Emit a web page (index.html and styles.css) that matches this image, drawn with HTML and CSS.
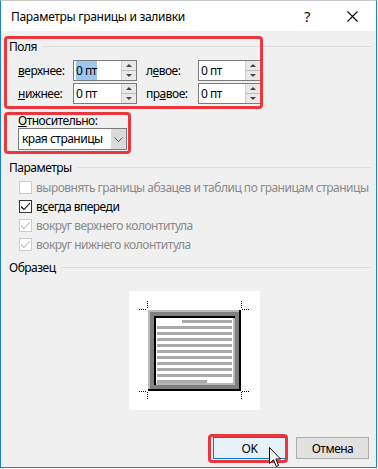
FILE: index.html
```html
<!DOCTYPE html>
<html lang="ru">
<head>
  <meta charset="UTF-8">
  <title>Параметры границы и заливки</title>
  <link rel="stylesheet" href="styles.css">
</head>
<body>
<div class="window">
  <div class="titlebar">
    <span class="title">Параметры границы и заливки</span>
    <span class="help">?</span>
    <span class="close">
      <svg width="11" height="11" viewBox="0 0 11 11"><path d="M0.5 0.5 L10.5 10.5 M10.5 0.5 L0.5 10.5" stroke="#000" stroke-width="1.1"/></svg>
    </span>
  </div>

  <div class="content">
    <section class="group">
      <div class="group-head"><span>Поля</span><i></i></div>
      <div class="margins">
        <label><u>в</u>ерхнее:</label>
        <div class="spin"><span class="value"><em>0 пт</em></span><span class="arrows"><b class="up"></b><b class="down"></b></span></div>
        <label class="second">л<u>е</u>вое:</label>
        <div class="spin"><span class="value">0 пт</span><span class="arrows"><b class="up"></b><b class="down"></b></span></div>
        <label><u>н</u>ижнее:</label>
        <div class="spin"><span class="value">0 пт</span><span class="arrows"><b class="up"></b><b class="down"></b></span></div>
        <label class="second">пр<u>а</u>вое:</label>
        <div class="spin"><span class="value">0 пт</span><span class="arrows"><b class="up"></b><b class="down"></b></span></div>
      </div>
    </section>

    <section class="relative-to">
      <label><u>О</u>тносительно:</label>
      <div class="combo">
        <span class="value">края страницы</span>
        <span class="drop"><svg width="9" height="5" viewBox="0 0 9 5"><path d="M0.5 0.5 L4.5 4.5 L8.5 0.5" fill="none" stroke="#555" stroke-width="1"/></svg></span>
      </div>
    </section>

    <section class="group">
      <div class="group-head"><span>Параметры</span><i></i></div>
      <div class="checks">
        <div class="check disabled"><span class="box"></span>выровнять границы абзацев и таблиц по границам страницы</div>
        <div class="check"><span class="box"><svg width="11" height="11" viewBox="0 0 11 11"><path d="M1 5.5 L4 8.5 L10 2" fill="none" stroke="#000" stroke-width="1.1"/></svg></span>в<u>с</u>егда впереди</div>
        <div class="check disabled"><span class="box"><svg width="11" height="11" viewBox="0 0 11 11"><path d="M1 5.5 L4 8.5 L10 2" fill="none" stroke="#bdbdbd" stroke-width="1.1"/></svg></span>вокруг верхнего колонтитула</div>
        <div class="check disabled"><span class="box"><svg width="11" height="11" viewBox="0 0 11 11"><path d="M1 5.5 L4 8.5 L10 2" fill="none" stroke="#bdbdbd" stroke-width="1.1"/></svg></span>вокруг нижнего колонтитула</div>
      </div>
    </section>

    <section class="group">
      <div class="group-head"><span>Образец</span><i></i></div>
      <div class="sample">
        <svg width="131" height="119" viewBox="0 0 131 119">
          <g stroke="#000" stroke-width="1" stroke-dasharray="1 1" fill="none">
            <path d="M10 18.5 H18 M18.5 10 V18"/>
            <path d="M113 18.5 H121 M112.5 10 V18"/>
            <path d="M10 100.5 H18 M18.5 101 V109"/>
            <path d="M113 100.5 H121 M112.5 101 V109"/>
          </g>
          <rect x="19" y="19" width="93" height="81" fill="#000"/>
          <rect x="19" y="19" width="91" height="79" fill="#b9b9b9"/>
          <rect x="21" y="21" width="89" height="77" fill="#808080"/>
          <rect x="25" y="25" width="81" height="69" fill="#000"/>
          <rect x="27" y="27" width="79" height="67" fill="#b9b9b9"/>
          <rect x="27" y="27" width="77" height="65" fill="#fff"/>
          <g fill="#aaaaaa">
            <rect x="53" y="29" width="50" height="3"/>
            <rect x="28" y="35" width="75" height="3"/>
            <rect x="28" y="41" width="75" height="3"/>
            <rect x="28" y="47" width="75" height="3"/>
            <rect x="28" y="53" width="75" height="3"/>
            <rect x="28" y="59" width="75" height="3"/>
            <rect x="28" y="65" width="75" height="3"/>
            <rect x="28" y="71" width="75" height="3"/>
            <rect x="28" y="77" width="75" height="3"/>
            <rect x="28" y="83" width="75" height="3"/>
            <rect x="28" y="89" width="50" height="3"/>
          </g>
        </svg>
      </div>
    </section>

    <div class="footer">
      <button class="btn default">OK</button>
      <button class="btn">Отмена</button>
    </div>
  </div>

  <div class="mark mark-margins"></div>
  <div class="mark mark-relative"></div>
  <div class="mark mark-ok"></div>

  <svg class="cursor" width="12" height="22" viewBox="0 0 12 22">
    <path d="M0.5 0.5 V16.5 L4.5 12.8 L7.3 19.5 L9.6 18.5 L6.9 12 H11.5 Z" fill="#fff" stroke="#000" stroke-width="1"/>
  </svg>
</div>
</body>
</html>
```

FILE: styles.css
```css
* {
  box-sizing: border-box;
}
body {
  margin: 0;
  font-family: "Noto Sans", "Open Sans", sans-serif;
  font-size: 12px;
  letter-spacing: -0.5px;
  color: #000;
  background: #fff;
}
.window {
  position: relative;
  width: 377px;
  height: 468px;
  border: 1px solid #1c7fd6;
  border-top-color: #c9c9c9;
  background: #f0f0f0;
  overflow: hidden;
}
.titlebar {
  height: 30px;
  background: #fff;
  display: flex;
  align-items: center;
  padding-left: 10px;
}
.title {
  flex: 1;
  font-size: 12px;
  letter-spacing: -0.3px;
}
.help {
  width: 44px;
  text-align: center;
  font-size: 14px;
  margin-right: 1px;
}
.close {
  width: 46px;
  display: flex;
  justify-content: center;
  padding-right: 1px;
}
.content {
  padding: 7px 5px 0 8px;
}
.group-head {
  display: flex;
  align-items: center;
  height: 16px;
}
.group-head i {
  flex: 1;
  height: 1px;
  background: #dcdcdc;
  margin-left: 5px;
}
.margins {
  display: grid;
  grid-template-columns: 55px 64px 61px 63px;
  grid-auto-rows: 21px;
  row-gap: 2px;
  margin: 6px 0 0 9px;
  align-items: center;
}
.margins label {
  line-height: 21px;
}
.margins label.second {
  padding-left: 9px;
}
.spin {
  display: flex;
  height: 21px;
  background: #fff;
  border: 1px solid #7a7a7a;
}
.spin .value {
  flex: 1;
  padding: 0 0 0 2px;
  line-height: 19px;
}
.spin em {
  font-style: normal;
  background: #99c9ef;
  padding: 1px 0;
}
.arrows {
  width: 15px;
  display: flex;
  flex-direction: column;
  border-left: 1px solid #d0d0d0;
}
.arrows b {
  flex: 1;
  display: flex;
  align-items: center;
  justify-content: center;
  background: #e8e8e8;
}
.arrows b.up {
  border-bottom: 1px solid #bdbdbd;
}
.arrows b::after {
  content: "";
  border-left: 3px solid transparent;
  border-right: 3px solid transparent;
}
.arrows b.up::after {
  border-bottom: 3px solid #444;
}
.arrows b.down::after {
  border-top: 3px solid #444;
}
.relative-to {
  margin: 10px 0 0 9px;
}
.relative-to label {
  display: block;
  line-height: 14px;
}
.combo {
  display: flex;
  width: 109px;
  height: 22px;
  background: #fff;
  border: 1px solid #7a7a7a;
}
.combo .value {
  flex: 1;
  padding-left: 3px;
  line-height: 20px;
}
.combo .drop {
  width: 15px;
  background: #dadada;
  display: flex;
  align-items: center;
  justify-content: center;
}
.relative-to + .group {
  margin-top: 9px;
}
.checks {
  margin: 3px 0 5px 10px;
}
.check {
  display: flex;
  align-items: center;
  height: 19px;
  white-space: nowrap;
}
.check .box {
  flex: none;
  width: 13px;
  height: 13px;
  border: 1px solid #333;
  background: #fff;
  margin-right: 4px;
  display: flex;
  align-items: center;
  justify-content: center;
}
.check.disabled {
  color: #8a8a8a;
}
.check.disabled .box {
  border-color: #cccccc;
}
.sample {
  margin: 16px 0 0 120px;
  width: 131px;
  height: 119px;
  background: #fff;
}
.sample svg {
  display: block;
}
.footer {
  display: flex;
  justify-content: flex-end;
  gap: 10px;
  margin: 27px 2px 0 0;
}
.btn {
  width: 73px;
  height: 22px;
  font: inherit;
  letter-spacing: inherit;
  background: #e1e1e1;
  border: 1px solid #adadad;
  padding: 0;
}
.btn.default {
  background: #e5f1fb;
  border-color: #0078d7;
}
.mark {
  position: absolute;
  border: 3px solid #e8383e;
  border-radius: 4px;
}
.mark-margins {
  left: 3px;
  top: 35px;
  width: 259px;
  height: 73px;
}
.mark-relative {
  left: 3px;
  top: 111px;
  width: 127px;
  height: 42px;
}
.mark-ok {
  left: 207px;
  top: 433px;
  width: 80px;
  height: 29px;
}
.cursor {
  position: absolute;
  left: 268px;
  top: 446px;
}
```
